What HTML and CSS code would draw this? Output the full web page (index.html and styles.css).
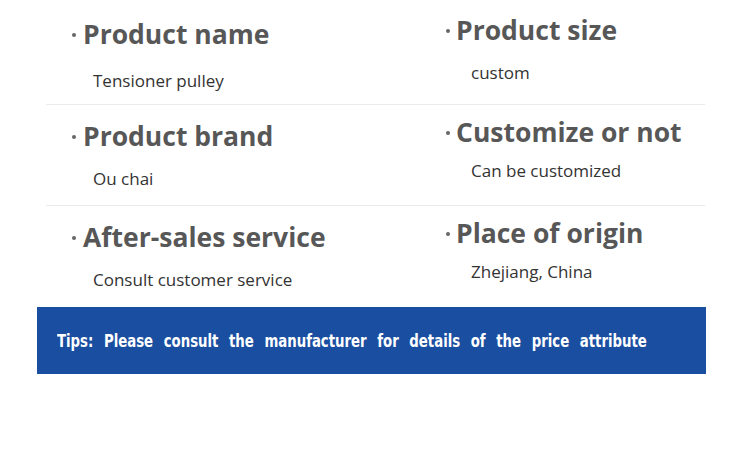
FILE: index.html
```html
<!DOCTYPE html>
<html lang="en">
<head>
<meta charset="utf-8">
<title>Product attributes</title>
<link rel="stylesheet" href="styles.css">
</head>
<body>
<div class="page">
  <div class="specs">
    <div class="row row-first">
      <div class="cell cell-left">
        <h2 class="title"><span class="dot"></span>Product name</h2>
        <p class="value">Tensioner pulley</p>
      </div>
      <div class="cell cell-right">
        <h2 class="title"><span class="dot"></span>Product size</h2>
        <p class="value">custom</p>
      </div>
    </div>
    <div class="row">
      <div class="cell cell-left">
        <h2 class="title"><span class="dot"></span>Product brand</h2>
        <p class="value">Ou chai</p>
      </div>
      <div class="cell cell-right">
        <h2 class="title"><span class="dot"></span>Customize or not</h2>
        <p class="value">Can be customized</p>
      </div>
    </div>
    <div class="row row-last">
      <div class="cell cell-left">
        <h2 class="title"><span class="dot"></span>After-sales service</h2>
        <p class="value">Consult customer service</p>
      </div>
      <div class="cell cell-right">
        <h2 class="title"><span class="dot"></span>Place of origin</h2>
        <p class="value">Zhejiang, China</p>
      </div>
    </div>
  </div>
  <div class="tips"><span class="tips-text">Tips: Please consult the manufacturer for details of the price attribute</span></div>
</div>
</body>
</html>
```

FILE: styles.css
```css
* { box-sizing: border-box; }
html, body { margin: 0; padding: 0; background: #fff; }
body { font-family: "Open Sans", "Noto Sans", sans-serif; }

.page {
  width: 669px;
  margin-left: 37px;
}

.specs {
  margin-left: 9px;
  width: 659px;
}

.row {
  display: grid;
  grid-template-columns: 400px 1fr;
  height: 101px;
  border-bottom: 1px solid #ebebeb;
  --pt: 14px;
  --gap: 15px;
}
.row-first { height: 105px; --pt: 17px; --gap: 19px; }
.row-last { border-bottom: none; height: 101px; }

.cell { padding-top: var(--pt); }
.cell-left { padding-left: 26px; }
.cell-left .title .dot { margin-right: 7px; }
.cell-left .value { padding-left: 21px; }
.cell-right { padding-top: calc(var(--pt) - 4px); }
.cell-right .value { margin-top: calc(var(--gap) - 4px); padding-left: 25px; }

.title {
  margin: 0;
  font-size: 26.5px;
  line-height: 34px;
  font-weight: 700;
  color: #575757;
  display: flex;
  align-items: center;
  white-space: nowrap;
}
.dot {
  width: 4px;
  height: 4px;
  border-radius: 50%;
  background: #666;
  margin-right: 6px;
  margin-top: 2px;
  flex: none;
}

.value {
  margin: var(--gap) 0 0 0;
  font-size: 17px;
  line-height: 22px;
  color: #333;
}

.tips {
  height: 67px;
  background: #1a4ea1;
  color: #fff;
  display: flex;
  align-items: center;
  padding-left: 20px;
  overflow: hidden;
}
.tips-text {
  display: inline-block;
  font-family: "DejaVu Sans Condensed", "Liberation Sans Narrow", sans-serif;
  font-stretch: condensed;
  font-weight: 700;
  font-size: 18px;
  word-spacing: 7.3px;
  white-space: nowrap;
  transform: scaleX(0.82);
  transform-origin: left center;
}
```
